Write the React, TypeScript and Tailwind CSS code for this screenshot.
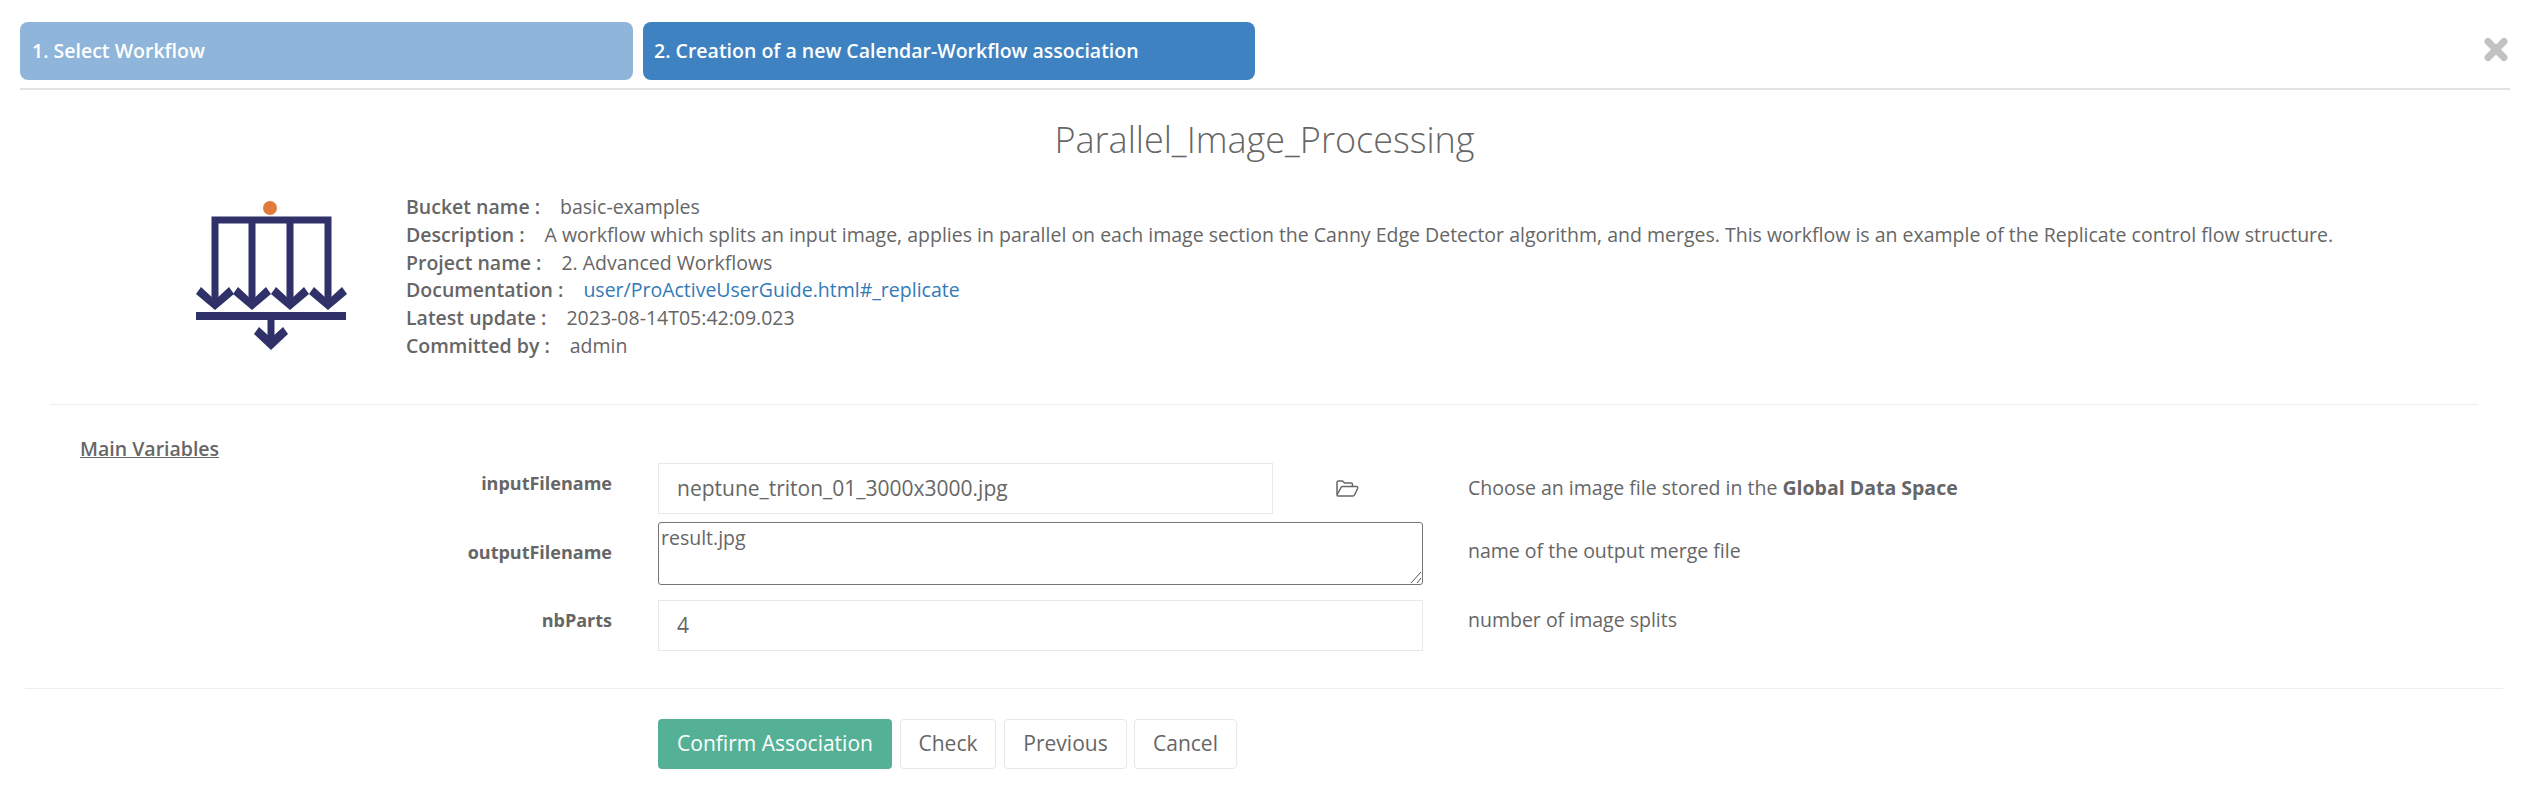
import React from "react";

const Info = ({ label, children }: { label: string; children: React.ReactNode }) => (
  <div className="flex whitespace-nowrap h-[27.8px] leading-[27.8px]">
    <span className="font-semibold">{label}</span>
    <span className="ml-[20px]">{children}</span>
  </div>
);

const inputCls =
  "h-[51px] border border-[#e8e8e8] pl-[18px] flex items-center text-[21px] text-[#666] bg-white";

const Btn = ({ children, w, ml }: { children: React.ReactNode; w: string; ml: string }) => (
  <button className={`h-[50px] ${w} ${ml} rounded border border-[#e8e8e8] bg-white text-[21px] text-[#666]`}>{children}</button>
);

const Head = ({ cx }: { cx: number }) => (
  <polygon
    points={`${cx - 19},94 ${cx - 14},87 ${cx},100 ${cx + 14},87 ${cx + 19},94 ${cx},110`}
    fill="#2f3168"
  />
);

export default function App() {
  return (
    <div className="w-[2528px] h-[796px] relative bg-white overflow-hidden text-[#666] text-[19.5px]" style={{ fontFamily: '"Open Sans", sans-serif' }}>
      <div className="mx-5 pt-[22px] h-[90px] border-b-2 border-[#e2e2e2] flex gap-[10px] w-[2490px] font-semibold text-white">
        <div className="w-[613px] h-[58px] rounded-lg bg-[#8fb5da] flex items-center pl-3">1. Select Workflow</div>
        <div className="w-[612px] h-[58px] rounded-lg bg-[#3e82c1] flex items-center pl-[11px]">2. Creation of a new Calendar-Workflow association</div>
      </div>
      <svg className="absolute left-[2484px] top-[37px]" width="24" height="25" viewBox="0 0 24 25">
        <path d="M4 4.5 L20 20.5 M20 4.5 L4 20.5" stroke="#c2c2c2" strokeWidth="7" strokeLinecap="round" />
      </svg>

      <h1 className="text-center text-[36px] font-light leading-[48px] mt-[26px] pl-[1px] text-[#666]">Parallel_Image_Processing</h1>

      <div className="flex mt-[29px] h-[191px]">
        <svg className="ml-[196px] mt-[7px] shrink-0 overflow-visible" width="150" height="152" viewBox="0 0 150 152" fill="none">
          <circle cx="74" cy="8" r="7" fill="#e07b39" />
          <path d="M19 100V20H132V100M56 20V100M94 20V100" stroke="#2f3168" strokeWidth="7" />
          <Head cx={19} />
          <Head cx={56} />
          <Head cx={94} />
          <Head cx={132} />
          <rect x="0" y="112" width="150" height="8" fill="#2f3168" />
          <path d="M75 120V142" stroke="#2f3168" strokeWidth="7" />
          <polygon points="58,134 63,127 75,138 87,127 92,134 75,150" fill="#2f3168" />
        </svg>
        <div className="ml-[60px]">
          <Info label="Bucket name :"><span>basic-examples</span></Info>
          <Info label="Description :">A workflow which splits an input image, applies in parallel on each image section the Canny Edge Detector algorithm, and merges. This workflow is an example of the Replicate control flow structure.</Info>
          <Info label="Project name :">2. Advanced Workflows</Info>
          <Info label="Documentation :"><span className="text-[#337ab7]">user/ProActiveUserGuide.html#_replicate</span></Info>
          <Info label="Latest update :">2023-08-14T05:42:09.023</Info>
          <Info label="Committed by :">admin</Info>
        </div>
      </div>

      <div className="mx-[50px] mt-[20px] border-t border-[#eeeeee]" />

      <div className="pl-[80px] pt-[30px] font-semibold underline leading-[27px]">Main Variables</div>

      <div className="grid grid-cols-[612px_615px_196px_1fr] mt-[1px] items-start">
        <div className="text-right font-bold text-[18px] h-[51px] leading-[40px]">inputFilename</div>
        <div className={`ml-[46px] w-[615px] ${inputCls}`}>neptune_triton_01_3000x3000.jpg</div>
        <div className="ml-[109px] h-[51px] flex items-center">
          <svg width="23" height="17" viewBox="0 0 23 17" fill="none" stroke="#666" strokeWidth="1.5" strokeLinejoin="round">
            <path d="M1 14.5V2.5A1.5 1.5 0 0 1 2.5 1H6.5L8.5 3H15A1.5 1.5 0 0 1 16.5 4.5V6.5" />
            <path d="M1 15L5 7.5A1.5 1.5 0 0 1 6.3 6.5H20.5A1.3 1.3 0 0 1 21.7 8.3L18.5 15A1.8 1.8 0 0 1 17 16H2A1 1 0 0 1 1 15Z" />
          </svg>
        </div>
        <div className="ml-[45px] h-[51px] flex items-center pb-[2px]"><span>Choose an image file stored in the <b>Global Data Space</b></span></div>
      </div>
      <div className="grid grid-cols-[612px_765px_1fr] mt-[8px] items-start">
        <div className="text-right font-bold text-[18px] leading-[60px]">outputFilename</div>
        <div className="ml-[46px] w-[765px] h-[63px] border border-[#767676] rounded-[3px] leading-[25px] pl-[2px] pt-[2px] relative text-[#666]">
          result.jpg
          <svg className="absolute right-0 bottom-0" width="14" height="14" viewBox="0 0 14 14"><path d="M3 13L13 2M9 13L13 8" stroke="#555" strokeWidth="1" /></svg>
        </div>
        <div className="ml-[91px] leading-[57px]">name of the output merge file</div>
      </div>
      <div className="grid grid-cols-[612px_765px_1fr] mt-[15px] items-start">
        <div className="text-right font-bold text-[18px] leading-[40px]">nbParts</div>
        <div className={`ml-[46px] w-[765px] ${inputCls}`}>4</div>
        <div className="ml-[91px] leading-[40px]">number of image splits</div>
      </div>

      <div className="mx-[25px] mt-[37px] border-t border-[#eeeeee]" />

      <div className="flex ml-[658px] mt-[30px]">
        <button className="h-[50px] w-[234px] rounded bg-[#54b195] text-white text-[21px]">Confirm Association</button>
        <Btn w="w-[96px]" ml="ml-[8px]">Check</Btn>
        <Btn w="w-[123px]" ml="ml-[8px]">Previous</Btn>
        <Btn w="w-[103px]" ml="ml-[7px]">Cancel</Btn>
      </div>
    </div>
  );
}
